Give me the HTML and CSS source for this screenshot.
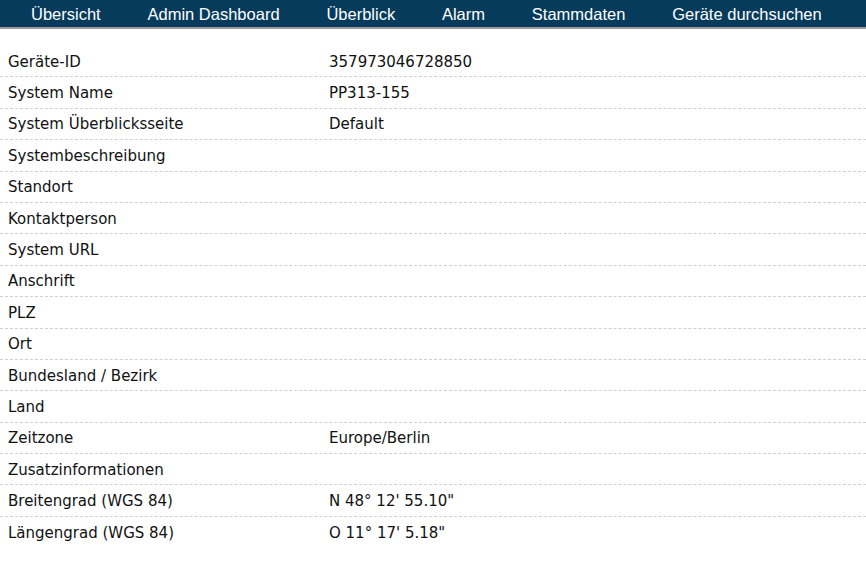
FILE: index.html
```html
<!DOCTYPE html>
<html lang="de">
<head>
<meta charset="utf-8">
<title>Stammdaten</title>
<link rel="stylesheet" href="styles.css">
</head>
<body>
<nav class="nav">
  <a class="nav-item">Übersicht</a>
  <a class="nav-item">Admin Dashboard</a>
  <a class="nav-item">Überblick</a>
  <a class="nav-item">Alarm</a>
  <a class="nav-item">Stammdaten</a>
  <a class="nav-item">Geräte durchsuchen</a>
</nav>
<main class="content">
  <div class="table">
    <div class="row"><div class="label">Geräte-ID</div><div class="value">357973046728850</div></div>
    <div class="row"><div class="label">System Name</div><div class="value">PP313-155</div></div>
    <div class="row"><div class="label">System Überblicksseite</div><div class="value">Default</div></div>
    <div class="row"><div class="label">Systembeschreibung</div><div class="value"></div></div>
    <div class="row"><div class="label">Standort</div><div class="value"></div></div>
    <div class="row"><div class="label">Kontaktperson</div><div class="value"></div></div>
    <div class="row"><div class="label">System URL</div><div class="value"></div></div>
    <div class="row"><div class="label">Anschrift</div><div class="value"></div></div>
    <div class="row"><div class="label">PLZ</div><div class="value"></div></div>
    <div class="row"><div class="label">Ort</div><div class="value"></div></div>
    <div class="row"><div class="label">Bundesland / Bezirk</div><div class="value"></div></div>
    <div class="row"><div class="label">Land</div><div class="value"></div></div>
    <div class="row"><div class="label">Zeitzone</div><div class="value">Europe/Berlin</div></div>
    <div class="row"><div class="label">Zusatzinformationen</div><div class="value"></div></div>
    <div class="row"><div class="label">Breitengrad (WGS 84)</div><div class="value">N 48° 12' 55.10"</div></div>
    <div class="row last"><div class="label">Längengrad (WGS 84)</div><div class="value">O 11° 17' 5.18"</div></div>
  </div>
</main>
</body>
</html>
```
FILE: styles.css
```css
html, body {
  margin: 0;
  padding: 0;
  background: #ffffff;
}
body {
  font-family: "DejaVu Sans", Verdana, sans-serif;
  color: #111111;
}
.nav {
  display: flex;
  align-items: center;
  gap: 46.8px;
  height: 29px;
  padding-top: 1px;
  box-sizing: border-box;
  background: #063b5c;
  border-bottom: 2px solid #9a9a9a;
  padding-left: 31px;
}
.nav-item {
  font-family: "Liberation Sans", Arial, sans-serif;
  font-size: 16.5px;
  color: #ffffff;
  white-space: nowrap;
}
.content {
  padding: 17px 0 0 0;
}
.table {
  display: flex;
  flex-direction: column;
}
.row {
  display: grid;
  grid-template-columns: 321px 1fr;
  align-items: center;
  height: 29.4px;
  padding-top: 1px;
  border-bottom: 1px dashed #cfcfcf;
  font-size: 15px;
  padding-left: 8px;
}
.row.last {
  border-bottom: none;
}
.value {
  white-space: nowrap;
}
```
